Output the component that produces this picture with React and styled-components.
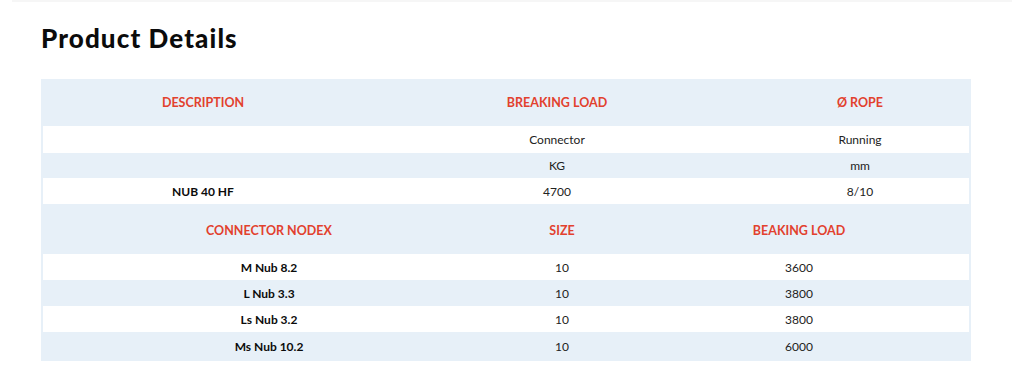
import React from 'react';
import styled, { createGlobalStyle } from 'styled-components';

const GlobalStyle = createGlobalStyle`
  body {
    margin: 0;
    background: #fff;
    font-family: Lato, "Noto Sans", sans-serif;
    color: #1a1a1a;
  }
`;

const Page = styled.div`
  border-top: 2px solid #f6f6f6;
  margin: 0 12px;
  padding: 0 41px 0 29px;
  height: 388px;
`;

const Title = styled.h2`
  margin: 0;
  padding-top: 20px;
  height: 57px;
  font-size: 26px;
  font-weight: 900;
  letter-spacing: 1.1px;
  color: #0b0b0b;
`;

const Table = styled.div`
  width: 926px;
  background: #e7f0f8;
  padding: 0 2px;
`;

const Row = styled.div`
  display: grid;
  grid-template-columns: ${p => p.$cols};
  align-items: center;
  height: ${p => p.$h || 26}px;
  background: ${p => (p.$white ? '#fff' : 'transparent')};
`;

const Head = styled.div`
  text-align: center;
  font-size: 12.5px;
  font-weight: 700;
  color: #e2412e;
  text-transform: uppercase;
  padding-top: ${p => p.$shift || 0}px;
`;

const Cell = styled.div`
  text-align: center;
  font-size: 12px;
  font-weight: ${p => (p.$bold ? 700 : 400)};
  color: ${p => (p.$bold ? '#0b0b0b' : '#222')};
`;

const TOP = '320px 388px 218px';
const BOTTOM = '452px 134px 340px';

const nodex = [
  ['M Nub 8.2', '10', '3600'],
  ['L Nub 3.3', '10', '3800'],
  ['Ls Nub 3.2', '10', '3800'],
  ['Ms Nub 10.2', '10', '6000'],
];

export default function App() {
  return (
    <>
      <GlobalStyle />
      <Page>
        <Title>Product Details</Title>
        <Table>
          <Row $cols={TOP} $h={47}>
            <Head>Description</Head>
            <Head>Breaking Load</Head>
            <Head>Ø Rope</Head>
          </Row>
          <Row $cols={TOP} $h={27} $white>
            <Cell />
            <Cell>Connector</Cell>
            <Cell>Running</Cell>
          </Row>
          <Row $cols={TOP} $h={25}>
            <Cell />
            <Cell>KG</Cell>
            <Cell>mm</Cell>
          </Row>
          <Row $cols={TOP} $h={26} $white>
            <Cell $bold>NUB 40 HF</Cell>
            <Cell>4700</Cell>
            <Cell>8/10</Cell>
          </Row>
          <Row $cols={BOTTOM} $h={50}>
            <Head $shift={2}>Connector Nodex</Head>
            <Head $shift={2}>Size</Head>
            <Head $shift={2}>Beaking Load</Head>
          </Row>
          {nodex.map((r, i) => (
            <Row key={r[0]} $cols={BOTTOM} $h={i === 3 ? 29 : 26} $white={i % 2 === 0}>
              <Cell $bold>{r[0]}</Cell>
              <Cell>{r[1]}</Cell>
              <Cell>{r[2]}</Cell>
            </Row>
          ))}
        </Table>
      </Page>
    </>
  );
}
